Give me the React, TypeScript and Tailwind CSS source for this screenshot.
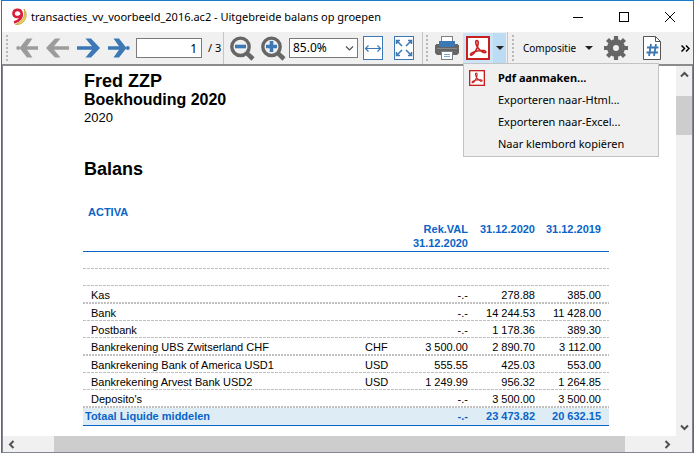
import React from "react";

const THIN =
  "bg-[repeating-linear-gradient(90deg,#c0c0c0_0_3px,transparent_3px_4px)] bg-[length:100%_1px] bg-no-repeat bg-bottom";
const THICK =
  "bg-[repeating-linear-gradient(90deg,#c0c0c0_0_2px,transparent_2px_3px)] bg-[length:100%_2px] bg-no-repeat bg-bottom";

type Row = { name: string; cur: string; account: string; current: string; previous: string; thick?: boolean };

const rows: Row[] = [
  { name: "Kas", cur: "", account: "-.-", current: "278.88", previous: "385.00", thick: true },
  { name: "Bank", cur: "", account: "-.-", current: "14 244.53", previous: "11 428.00" },
  { name: "Postbank", cur: "", account: "-.-", current: "1 178.36", previous: "389.30" },
  { name: "Bankrekening UBS Zwitserland CHF", cur: "CHF", account: "3 500.00", current: "2 890.70", previous: "3 112.00", thick: true },
  { name: "Bankrekening Bank of America USD1", cur: "USD", account: "555.55", current: "425.03", previous: "553.00" },
  { name: "Bankrekening Arvest Bank USD2", cur: "USD", account: "1 249.99", current: "956.32", previous: "1 264.85" },
  { name: "Deposito's", cur: "", account: "-.-", current: "3 500.00", previous: "3 500.00", thick: true },
];

function Grip() {
  return (
    <span className="h-[26px] w-[2px] shrink-0 bg-[repeating-linear-gradient(180deg,#b8b8b8_0_2px,transparent_2px_4px)]" />
  );
}

function Separator() {
  return <span className="h-full w-px shrink-0 bg-[#c5c5c5]" />;
}

function Arrow({ className }: { className: string }) {
  return (
    <svg width="23" height="20" viewBox="0 0 23 20" className={className}>
      <path d="M0 8.300H15L8.500 .5H14L23 10L14 19.500H8.500L15 11.700H0Z" fill="currentColor" />
    </svg>
  );
}

function EndArrow({ className }: { className: string }) {
  return (
    <svg width="22" height="20" viewBox="0 0 22 20" className={className}>
      <path d="M0 8.300H11L5.500 .5H11L18.500 10L11 19.500H5.500L11 11.700H0Z" fill="currentColor" />
      <circle cx="19.800" cy="10" r="1.900" fill="currentColor" />
    </svg>
  );
}

function Magnifier({ plus }: { plus?: boolean }) {
  return (
    <svg width="25" height="25" viewBox="0 0 25 25" fill="none">
      <circle cx="10.500" cy="10.800" r="8.700" stroke="#666" strokeWidth="3.400" />
      <path d="M16.800 17.200L23 23" stroke="#666" strokeWidth="4.500" />
      <path d={plus ? "M5 10.500H16M10.500 5V16" : "M5 10.500H16"} stroke="#3b78b5" strokeWidth="3.600" />
    </svg>
  );
}

function FitWidth() {
  return (
    <svg width="20" height="24" viewBox="0 0 20 24" fill="none" stroke="#3b78b5">
      <rect x=".5" y=".5" width="19" height="23" fill="#fff" />
      <path d="M3 12.500H17M5.500 9.500L2.500 12.500L5.500 15.500M14.500 9.500L17.500 12.500L14.500 15.500" strokeWidth="1.200" />
    </svg>
  );
}

function FitPage() {
  return (
    <svg width="20" height="24" viewBox="0 0 20 24" fill="none" stroke="#3b78b5">
      <rect x=".5" y=".5" width="19" height="23" fill="#fff" />
      <path
        d="M2.500 8V4.500H6M2.500 4.500L8 10M17.500 8V4.500H14M17.500 4.500L12 10M2.500 16V19.500H6M2.500 19.500L8 14M17.500 16V19.500H14M17.500 19.500L12 14"
        strokeWidth="1.500"
      />
    </svg>
  );
}

function Printer() {
  return (
    <svg width="24" height="24" viewBox="0 0 24 24">
      <path d="M1 8H23V9H24V17L22 19H2L0 17V9H1Z" fill="#666" />
      <rect x="6.500" y=".5" width="11" height="7" fill="#fff" stroke="#808080" />
      <path d="M4 5H20V9L18 11H6L4 9Z" fill="#3b78b5" />
      <rect x="2" y="12" width="20" height="1" fill="#8a8a8a" />
      <rect x="6.500" y="15.500" width="11" height="8" fill="#fff" stroke="#808080" />
      <path d="M9 18.500H15M9 20.500H15" stroke="#7fa6cc" />
    </svg>
  );
}

function Pdf({ size }: { size: number }) {
  return (
    <svg width={size} height={size} viewBox="0 0 24 24" fill="none" stroke="#c8201e">
      <rect x="1" y="1" width="22" height="22" fill="#fff" strokeWidth="2" />
      <path
        d="M10.500 4.500C12.800 4.300 12.600 8 11 12C9.400 16 6.500 19.800 4.800 19C3.400 18 7 15.800 11.500 15C16 14.200 20.300 14.500 19.800 16.200C19 18 14.500 15.400 12 12C9.800 9 9 5 10.500 4.500Z"
        strokeWidth="1.600"
      />
    </svg>
  );
}

function Gear() {
  return (
    <svg width="24" height="24" viewBox="0 0 24 24" fill="none" stroke="#666">
      <circle cx="12" cy="12" r="6" strokeWidth="6" />
      <path d="M12 0V5M12 19V24M0 12H5M19 12H24M3.500 3.500L7 7M17 17L20.500 20.500M3.500 20.500L7 17M17 7L20.500 3.500" strokeWidth="4.200" />
    </svg>
  );
}

function PageNumber() {
  return (
    <svg width="18" height="24" viewBox="0 0 18 24" fill="none">
      <path d="M.5 .5H12.500L17.500 5.500V23.500H.5Z" fill="#fff" stroke="#555" />
      <path d="M12.500 .5V5.500H17.500" stroke="#555" />
      <path d="M8 8L6 20M13 8L11 20M4 11.500H15.500M3.500 16.500H15" stroke="#3b78b5" strokeWidth="1.800" />
    </svg>
  );
}

function Caret() {
  return (
    <svg width="8" height="4" viewBox="0 0 8 4">
      <path d="M0 0H8L4 4Z" fill="#222" />
    </svg>
  );
}

function Chevron({ className = "", thin }: { className?: string; thin?: boolean }) {
  return (
    <svg width="9" height="7" viewBox="0 0 9 7" className={className}>
      <path d="M1 5.500L4.500 2L8 5.500" fill="none" stroke="#505050" strokeWidth={thin ? 1.2 : 2} />
    </svg>
  );
}

function TitleBar() {
  return (
    <header className="flex h-[31px] shrink-0 items-center bg-white pl-2">
      <svg width="17" height="18" viewBox="0 0 17 18">
        <path d="M14 1C16 8 12.500 13.500 5.500 16.500C12 17.500 17.500 12 16 4Z" fill="#ecd04e" stroke="#b0902a" strokeWidth=".6" />
        <path d="M11 7.500C8 10.300 3.500 9 3.500 5.700C3.500 1.200 10 .5 11.500 4.500C12.800 9.500 9 13 4 14.500" fill="none" stroke="#d81e3c" strokeWidth="2.600" />
      </svg>
      <h1 className="ml-1 flex-1 text-[11px] leading-4 whitespace-nowrap">
        transacties_vv_voorbeeld_2016.ac2 - Uitgebreide balans op groepen
      </h1>
      <button aria-label="Minimaliseren" className="flex w-[46px] justify-center">
        <svg width="10" height="10" viewBox="0 0 10 10">
          <path d="M0 5.500H10" stroke="#000" />
        </svg>
      </button>
      <button aria-label="Maximaliseren" className="flex w-[46px] justify-center">
        <svg width="10" height="10" viewBox="0 0 10 10">
          <rect x=".5" y=".5" width="9" height="9" fill="none" stroke="#000" />
        </svg>
      </button>
      <button aria-label="Sluiten" className="flex w-[46px] justify-center">
        <svg width="10" height="10" viewBox="0 0 10 10">
          <path d="M0 0L10 10M10 0L0 10" stroke="#000" />
        </svg>
      </button>
    </header>
  );
}

function ExportMenu() {
  const item = "flex h-[22px] w-full items-center pl-[34px] text-left whitespace-nowrap";
  return (
    <div
      role="menu"
      className="absolute top-full left-0 z-10 w-[196px] border border-[#c3c3c3] bg-[#f0f0f0] pt-[3px] pb-px text-[11px]"
    >
      <button role="menuitem" className="flex h-[22px] w-full items-center gap-[13px] pl-[5px] text-left font-bold whitespace-nowrap">
        <Pdf size={16} />
        Pdf aanmaken...
      </button>
      <button role="menuitem" className={item}>Exporteren naar-Html...</button>
      <button role="menuitem" className={item}>Exporteren naar-Excel...</button>
      <button role="menuitem" className={item}>Naar klembord kopiëren</button>
    </div>
  );
}

function Toolbar() {
  return (
    <div className="flex h-[34px] shrink-0 items-center border-b-2 border-[#8b8b8b] bg-[#f0f0f0] pl-1 text-[12px]">
      <Grip />
      <button aria-label="Eerste pagina" className="ml-2"><EndArrow className="-scale-x-100 text-[#9c9c9c]" /></button>
      <button aria-label="Vorige pagina" className="ml-2"><Arrow className="-scale-x-100 text-[#9c9c9c]" /></button>
      <button aria-label="Volgende pagina" className="ml-2"><Arrow className="text-[#3b78b5]" /></button>
      <button aria-label="Laatste pagina" className="ml-2"><EndArrow className="text-[#3b78b5]" /></button>
      <input
        aria-label="Pagina"
        defaultValue="1"
        className="ml-[6px] h-5 w-[66px] shrink-0 border border-[#7a7a7a] bg-white pr-1 text-right"
      />
      <span className="ml-[6px] w-[15px] shrink-0 text-[11px] whitespace-nowrap">/ 3</span>
      <Separator />
      <button aria-label="Verkleinen" className="ml-[6px]"><Magnifier /></button>
      <button aria-label="Vergroten" className="ml-[6px]"><Magnifier plus /></button>
      <span className="relative ml-[3px] h-5 w-[69px] shrink-0">
        <select aria-label="Zoomniveau" className="h-5 w-full appearance-none border border-[#7a7a7a] bg-white pl-[3px]">
          <option>85.0%</option>
        </select>
        <Chevron thin className="pointer-events-none absolute top-[7px] right-1 rotate-180" />
      </span>
      <button aria-label="Paginabreedte" className="ml-[5px]"><FitWidth /></button>
      <button aria-label="Hele pagina" className="ml-[11px]"><FitPage /></button>
      <span className="ml-2 flex h-full"><Separator /></span>
      <span className="ml-[3px] flex"><Grip /></span>
      <button aria-label="Afdrukken" className="ml-[7px]"><Printer /></button>
      <div className="relative ml-1 flex h-[30px] shrink-0">
        <button aria-label="Pdf aanmaken" className="flex w-[30px] items-center justify-center bg-[#cce4f7]">
          <Pdf size={24} />
        </button>
        <button aria-label="Exportopties" aria-haspopup="menu" aria-expanded="true" className="flex w-[13px] items-center justify-center bg-[#bcdcf4]">
          <Caret />
        </button>
        <ExportMenu />
      </div>
      <span className="ml-px flex h-full"><Separator /></span>
      <span className="ml-1 flex"><Grip /></span>
      <button className="ml-[9px] flex items-center gap-[9px] text-[10px]">
        Compositie
        <Caret />
      </button>
      <button aria-label="Instellingen" className="ml-[11px]"><Gear /></button>
      <button aria-label="Paginanummer" className="ml-[15px]"><PageNumber /></button>
      <button aria-label="Meer" className="mr-[3px] ml-auto">
        <svg width="9" height="7" viewBox="0 0 9 7" fill="none" stroke="#000" strokeWidth="1.500">
          <path d="M.5 .5L3.500 3.500L.5 6.500M5 .5L8 3.500L5 6.500" />
        </svg>
      </button>
    </div>
  );
}

function Report() {
  const amount = "pr-[6px] text-right";
  return (
    <main className="min-w-0 flex-1 overflow-hidden bg-white pl-20 font-['Liberation_Sans',Arial,sans-serif]">
      <div className="pt-[5px] pl-px">
        <h2 className="text-[18px] leading-5 font-bold">Fred ZZP</h2>
        <h3 className="text-[16px] leading-[18px] font-bold">Boekhouding 2020</h3>
        <p className="text-[13px] leading-[18px]">2020</p>
        <h2 className="mt-8 text-[18px] leading-5 font-bold">Balans</h2>
      </div>
      <table className="mt-[25px] w-[526px] table-fixed border-collapse text-[11px] leading-[14px]">
        <caption className="h-[18px] pt-px pl-[5px] text-left font-bold text-[#0a64c8]">ACTIVA</caption>
        <colgroup>
          <col className="w-[274px]" />
          <col className="w-[50px]" />
          <col className="w-[67px]" />
          <col className="w-[67px]" />
          <col className="w-[68px]" />
        </colgroup>
        <thead className="text-[#0a64c8]">
          <tr className="h-[29px] border-b border-[#0a64c8] align-top">
            <th colSpan={2} />
            <th className={amount}>Rek.VAL 31.12.2020</th>
            <th className={amount}>31.12.2020</th>
            <th className="pr-2 text-right">31.12.2019</th>
          </tr>
        </thead>
        <tbody>
          <tr className={`h-[18px] ${THIN}`}><td colSpan={5} /></tr>
          <tr className={`h-[17px] ${THIN}`}><td colSpan={5} /></tr>
          {rows.map((r) => (
            <tr key={r.name} className={r.thick ? `h-[18px] ${THICK}` : `h-[17px] ${THIN}`}>
              <td className="pl-2">{r.name}</td>
              <td className="pl-2">{r.cur}</td>
              <td className={amount}>{r.account}</td>
              <td className={amount}>{r.current}</td>
              <td className="pr-2 text-right">{r.previous}</td>
            </tr>
          ))}
        </tbody>
        <tfoot>
          <tr className="h-[17px] border-b border-[#0a64c8] bg-[#deedf5] font-bold text-[#0a64c8]">
            <td className="pl-[2px]">Totaal Liquide middelen</td>
            <td />
            <td className={amount}>-.-</td>
            <td className={amount}>23 473.82</td>
            <td className="pr-2 text-right">20 632.15</td>
          </tr>
        </tfoot>
      </table>
    </main>
  );
}

export default function App() {
  return (
    <div className="ml-px flex h-screen flex-col border border-b-0 border-[#1979ca] bg-white font-['Noto_Sans','Open_Sans',sans-serif] text-black">
      <TitleBar />
      <Toolbar />
      <div className="flex min-h-0 flex-1 flex-col border border-t-0 border-[#828790]">
        <div className="flex min-h-0 flex-1">
          <Report />
          <div className="flex w-4 flex-col items-center bg-[#f0f0f0]">
            <button aria-label="Omhoog" className="flex h-[17px] items-center"><Chevron /></button>
            <span className="mt-[13px] h-[39px] w-full bg-[#cdcdcd]" />
            <span className="flex-1" />
            <button aria-label="Omlaag" className="flex h-[17px] items-center"><Chevron className="rotate-180" /></button>
          </div>
        </div>
        <div className="flex h-4 items-center bg-[#f0f0f0] pr-4">
          <button aria-label="Naar links" className="flex w-[17px] justify-center"><Chevron className="-rotate-90" /></button>
          <div className="h-full flex-1 pr-[34px] pl-[34px]">
            <div className="h-full bg-[#cdcdcd]" />
          </div>
          <button aria-label="Naar rechts" className="flex w-[17px] justify-center"><Chevron className="rotate-90" /></button>
        </div>
      </div>
    </div>
  );
}
